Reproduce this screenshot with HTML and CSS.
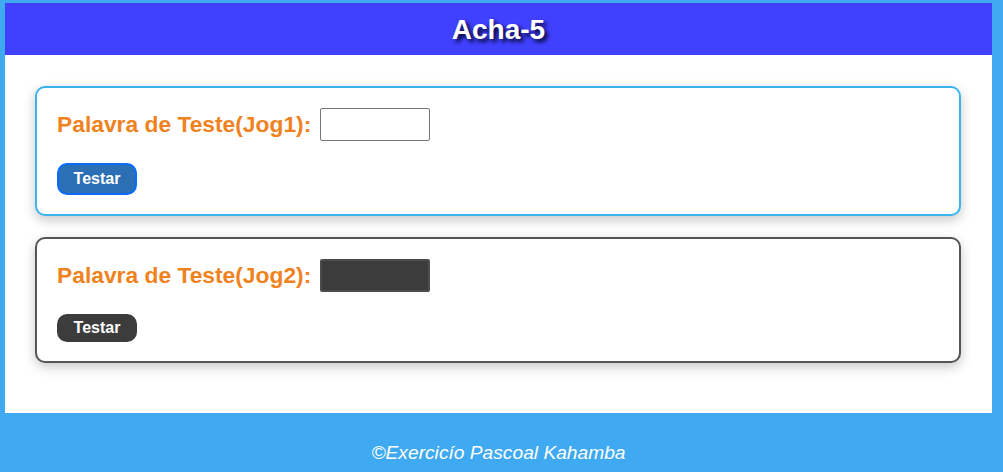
FILE: index.html
```html
<!DOCTYPE html>
<html lang="pt">
<head>
<meta charset="utf-8">
<title>Acha-5</title>
<link rel="stylesheet" href="styles.css">
</head>
<body>
<div class="page">
  <header class="top">
    <h1 class="title">Acha-5</h1>
  </header>
  <main class="content">
    <section class="card card-light">
      <div class="row">
        <label class="label" for="w1">Palavra de Teste(Jog1):</label>
        <input class="field field-light" id="w1" type="text">
      </div>
      <button class="btn btn-blue">Testar</button>
    </section>
    <section class="card card-dark">
      <div class="row">
        <label class="label" for="w2">Palavra de Teste(Jog2):</label>
        <input class="field field-dark" id="w2" type="text">
      </div>
      <button class="btn btn-dark">Testar</button>
    </section>
  </main>
</div>
<footer class="foot">©Exercicío Pascoal Kahamba</footer>
</body>
</html>
```

FILE: styles.css
```css
html, body {
  margin: 0;
  height: 100%;
}
body {
  background: #3fa9f1;
  padding: 3px 11px 0 5px;
  box-sizing: border-box;
  font-family: "Liberation Sans", Arial, sans-serif;
}
.page {
  background: #ffffff;
}
.top {
  background: #4040ff;
  height: 52px;
  display: flex;
  align-items: center;
  justify-content: center;
}
.title {
  margin: 0;
  color: #ffffff;
  font-size: 28px;
  font-weight: bold;
  text-shadow: 3px 3px 4px #000022;
  line-height: 1;
  position: relative;
  top: 1px;
}
.content {
  padding: 31px 31px 50px 30px;
  display: flex;
  flex-direction: column;
  gap: 21px;
}
.card {
  border: 2px solid #3bb4ee;
  border-radius: 10px;
  padding: 20px 20px 19px 20px;
  box-shadow: 0 4px 12px rgba(0, 0, 0, 0.22);
  background: #fff;
}
.card-dark {
  border-color: #555555;
}
.row {
  display: flex;
  align-items: center;
  gap: 9px;
}
.label {
  color: #f0821e;
  font-size: 22.8px;
  font-weight: bold;
}
.field {
  width: 110px;
  height: 33px;
  box-sizing: border-box;
  margin: 0;
  font-size: 14px;
  border-radius: 2px;
}
.field-light {
  border: 1px solid #767676;
  background: #fff;
}
.field-dark {
  border: 2px solid #4c4c4c;
  background: #3c3c3c;
}
.btn {
  display: block;
  margin-top: 22px;
  width: 80px;
  box-sizing: border-box;
  font-family: "Liberation Sans", Arial, sans-serif;
  font-size: 16px;
  font-weight: bold;
  color: #ffffff;
  border-radius: 10px;
  line-height: 18px;
  cursor: pointer;
}
.btn-blue {
  background: #2b6fb5;
  border: 2px solid #0a6cff;
  height: 32px;
  padding: 5px 0;
}
.btn-dark {
  background: #3c3c3c;
  border: none;
  height: 28px;
  padding: 5px 0;
}
.foot {
  padding-top: 29px;
  text-align: center;
  color: #ffffff;
  font-style: italic;
  font-size: 19.2px;
  line-height: 22px;
}
```
